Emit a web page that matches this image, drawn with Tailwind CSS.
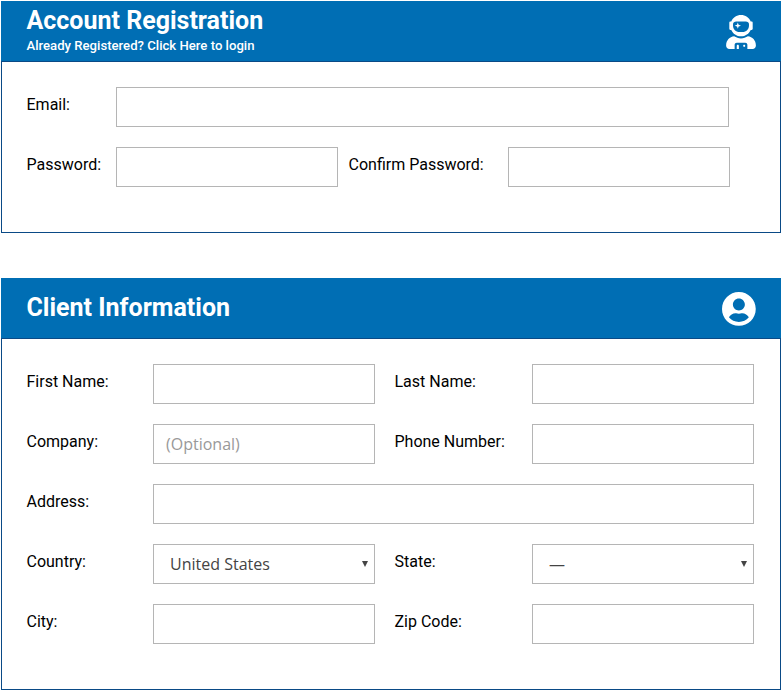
<!DOCTYPE html>
<html lang="en">
  <head>
    <meta charset="UTF-8" />
    <meta name="viewport" content="width=device-width, initial-scale=1.0" />
    <title>Account Registration</title>
    <script src="https://cdn.jsdelivr.net/npm/@tailwindcss/browser@4"></script>
  </head>
  <body class="bg-white font-[Roboto,sans-serif] text-base text-black">
    <form class="flex w-[781px] flex-col gap-[45px] pt-px pl-px">
      <section>
        <header
          class="flex h-[60px] items-start justify-between bg-[#006eb4] pr-[25px] pl-[25.5px] text-white"
        >
          <div class="pt-1">
            <h1 class="text-[25px] leading-8 font-bold">Account Registration</h1>
            <a href="#" class="block text-[13.15px] leading-[18px] font-medium"
              >Already Registered? Click Here to login</a
            >
          </div>
          <svg
            class="mt-3.5 h-[34px] w-[30px]"
            viewBox="0 0 448 512"
            fill="currentColor"
          >
            <path
              d="M64 224h13.5c24.7 56.5 80.9 96 146.5 96s121.8-39.5 146.5-96H384c8.8 0 16-7.2 16-16v-96c0-8.8-7.2-16-16-16h-13.5C345.8 39.5 289.6 0 224 0S102.2 39.5 77.5 96H64c-8.8 0-16 7.2-16 16v96c0 8.8 7.2 16 16 16zm40-88c0-22.1 21.5-40 48-40h144c26.5 0 48 17.9 48 40v24c0 53-43 96-96 96h-48c-53 0-96-43-96-96v-24zm72 72l12-36 36-12-36-12-12-36-12 36-36 12 36 12 12 36zm151.6 113.4C297.7 340.7 262.2 352 224 352s-73.7-11.3-103.6-30.6C52.9 328.5 0 385 0 454.4v9.6c0 26.5 21.5 48 48 48h80v-64c0-17.7 14.3-32 32-32h128c17.7 0 32 14.3 32 32v64h80c26.5 0 48-21.5 48-48v-9.6c0-69.4-52.9-125.9-120.4-133zM272 448c-8.8 0-16 7.2-16 16s7.2 16 16 16 16-7.2 16-16-7.2-16-16-16zm-96 0c-8.8 0-16 7.2-16 16v48h32v-48c0-8.8-7.2-16-16-16z"
            />
          </svg>
        </header>
        <div
          class="flex h-[172px] flex-col gap-5 border border-[#0a4a86] pt-[25px] pl-[24.5px]"
        >
          <div class="flex">
            <label for="email" class="w-[89.5px] pt-1.5">Email:</label>
            <input
              id="email"
              type="email"
              class="h-10 w-[613px] border border-[#b5b5b5] px-3"
            />
          </div>
          <div class="flex">
            <label for="password" class="w-[89.5px] pt-1.5">Password:</label>
            <input
              id="password"
              type="password"
              class="mr-[10.5px] h-10 w-[222px] border border-[#b5b5b5] px-3"
            />
            <label for="confirm" class="w-[159.5px] pt-1.5"
              >Confirm Password:</label
            >
            <input
              id="confirm"
              type="password"
              class="h-10 w-[222px] border border-[#b5b5b5] px-3"
            />
          </div>
        </div>
      </section>

      <section>
        <header
          class="flex h-[60px] items-start justify-between bg-[#006eb4] pr-[25px] pl-[25.5px] text-white"
        >
          <h2 class="pt-3.5 text-[25px] leading-8 font-bold">
            Client Information
          </h2>
          <svg
            class="mt-3.5 size-[33.75px]"
            viewBox="0 8 496 496"
            fill="currentColor"
          >
            <path
              d="M248 8C111 8 0 119 0 256s111 248 248 248 248-111 248-248S385 8 248 8zm0 96c48.6 0 88 39.4 88 88s-39.4 88-88 88-88-39.4-88-88 39.4-88 88-88zm0 344c-58.7 0-111.3-26.6-146.5-68.2 18.8-35.4 55.6-59.8 98.5-59.8 2.4 0 4.8.4 7.1 1.1 13 4.2 26.6 6.9 40.9 6.9 14.3 0 28-2.7 40.9-6.9 2.3-.7 4.7-1.1 7.1-1.1 42.9 0 79.7 24.4 98.5 59.8C359.3 421.4 306.7 448 248 448z"
            />
          </svg>
        </header>
        <div
          class="grid h-[352px] grid-cols-[126.5px_222px_19.5px_137.5px_222px] content-start gap-y-5 border border-[#0a4a86] pt-[25px] pl-[24.5px]"
        >
          <label for="first" class="pt-1.5">First Name:</label>
          <input id="first" class="h-10 border border-[#b5b5b5] px-3" />
          <label for="last" class="col-start-4 pt-1.5">Last Name:</label>
          <input id="last" class="h-10 border border-[#b5b5b5] px-3" />

          <label for="company" class="pt-1.5">Company:</label>
          <input
            id="company"
            placeholder="(Optional)"
            class="h-10 border border-[#b5b5b5] px-3 font-['Open_Sans',sans-serif] placeholder:text-[#999]"
          />
          <label for="phone" class="col-start-4 pt-1.5">Phone Number:</label>
          <input id="phone" class="h-10 border border-[#b5b5b5] px-3" />

          <label for="address" class="pt-1.5">Address:</label>
          <input
            id="address"
            class="col-span-4 h-10 border border-[#b5b5b5] px-3"
          />

          <label for="country" class="pt-1.5">Country:</label>
          <div class="relative">
            <select
              id="country"
              class="h-10 w-full appearance-none border border-[#b5b5b5] px-4 font-['Open_Sans',sans-serif] text-[#444]"
            >
              <option>United States</option>
            </select>
            <svg
              class="pointer-events-none absolute top-[17px] right-[7px] h-1.5 w-1.5"
              viewBox="0 0 6 6"
              fill="#444"
            >
              <path d="M0 0h6L3 6z" />
            </svg>
          </div>
          <label for="state" class="col-start-4 pt-1.5">State:</label>
          <div class="relative">
            <select
              id="state"
              class="h-10 w-full appearance-none border border-[#b5b5b5] px-4 font-['Open_Sans',sans-serif] text-[#444]"
            >
              <option>—</option>
            </select>
            <svg
              class="pointer-events-none absolute top-[17px] right-[7px] h-1.5 w-1.5"
              viewBox="0 0 6 6"
              fill="#444"
            >
              <path d="M0 0h6L3 6z" />
            </svg>
          </div>

          <label for="city" class="pt-1.5">City:</label>
          <input id="city" class="h-10 border border-[#b5b5b5] px-3" />
          <label for="zip" class="col-start-4 pt-1.5">Zip Code:</label>
          <input id="zip" class="h-10 border border-[#b5b5b5] px-3" />
        </div>
      </section>
    </form>
  </body>
</html>
